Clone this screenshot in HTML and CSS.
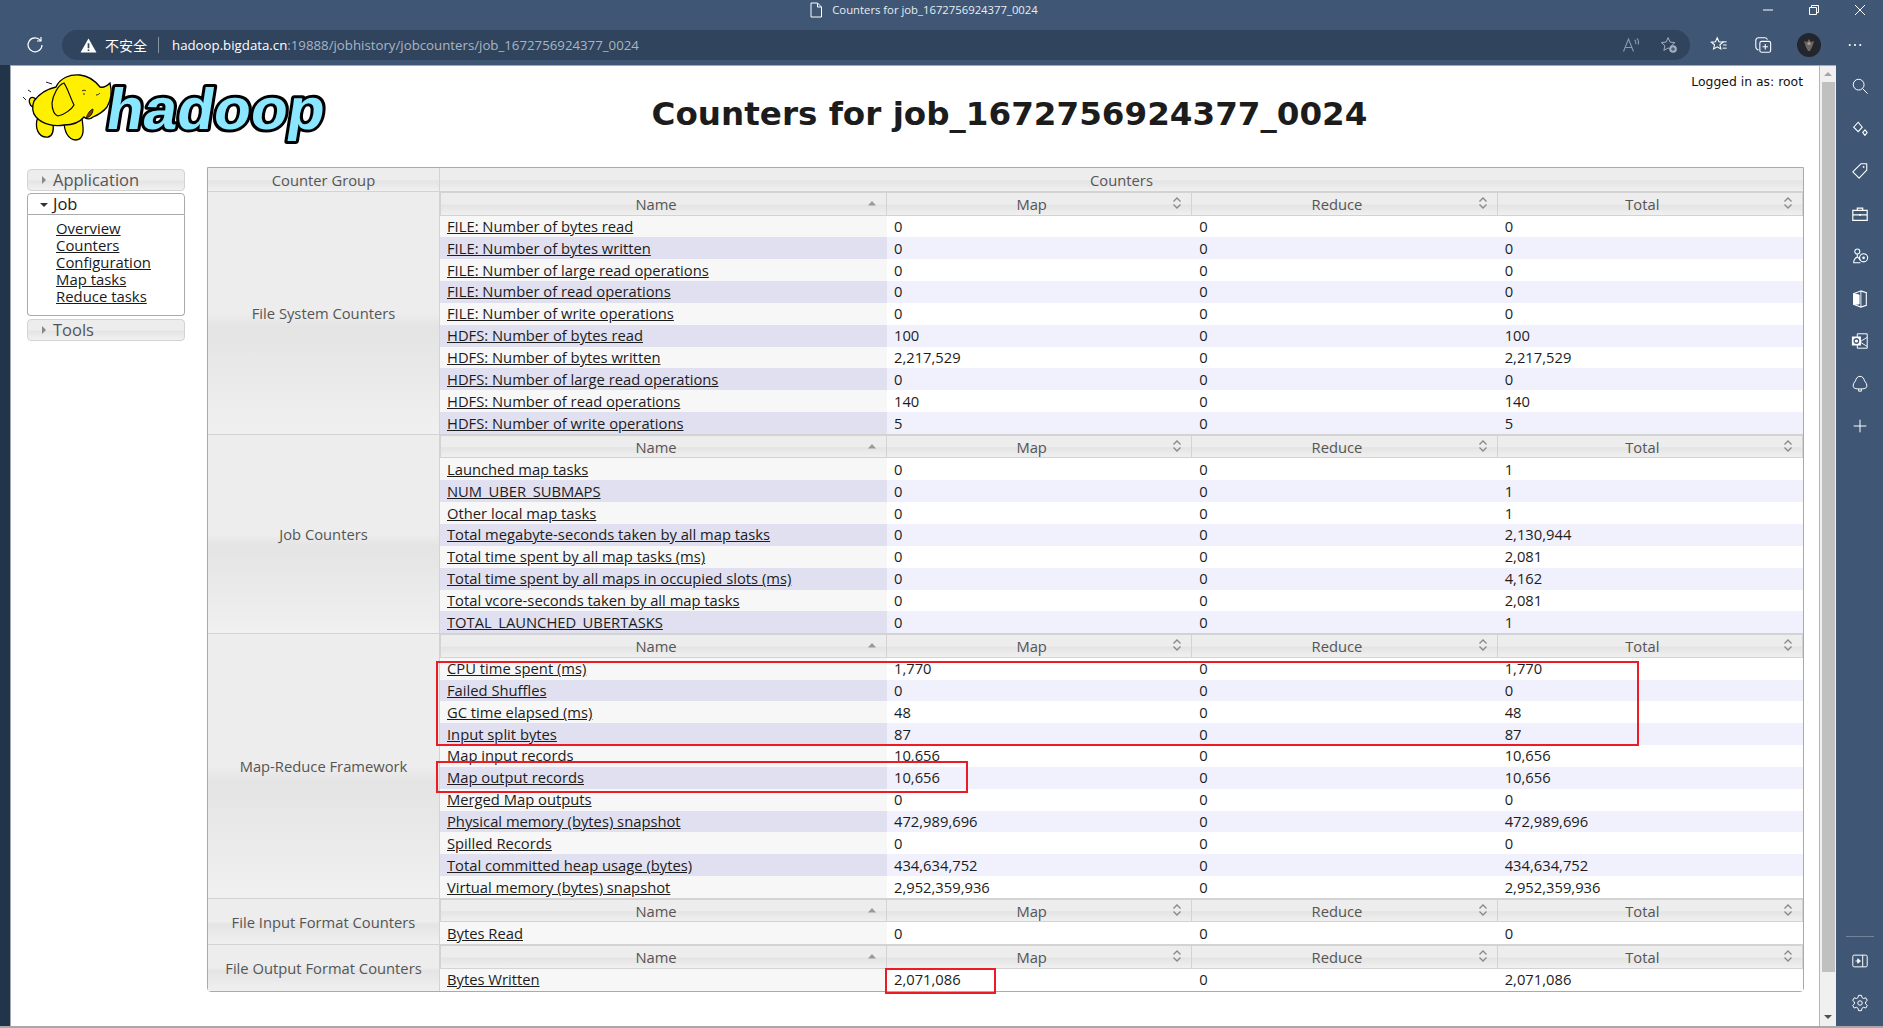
FILE: index.html
```html
<!DOCTYPE html>
<html lang="en">
<head>
    <meta charset="UTF-8">
    <meta name="viewport" content="width=device-width, initial-scale=1.0">
    <title>Counters for job_1672756924377_0024</title>
    <link rel="stylesheet" href="styles.css">
</head>
<body>
    <svg class="sprite" aria-hidden="true">
        <symbol id="sort-asc" viewBox="0 0 12 12"><path d="M2 8.500 6 4l4 4.500z" fill="#999"/></symbol>
        <symbol id="sort-both" viewBox="0 0 12 14"><path d="M2.500 5.500 6 2l3.500 3.500M2.500 8.500 6 12l3.500-3.500" fill="none" stroke="#888" stroke-width="1.300"/></symbol>
    </svg>

    <!-- browser title bar -->
    <div class="titlebar">
        <svg class="tab-icon" viewBox="0 0 14 16"><path d="M2 1h6.500L12.500 5v10H2zM8.500 1v4h4" fill="none" stroke="#fff" stroke-width="1"/></svg>
        <span class="tab-title">Counters for job_1672756924377_0024</span>
        <div class="window-btns">
            <svg viewBox="0 0 12 12"><path d="M1 6h10" stroke="#fff" stroke-width="1"/></svg>
            <svg viewBox="0 0 12 12"><path d="M1.500 3.500h7v7h-7zM3.500 3.500V1.500h7v7H8.500" fill="none" stroke="#fff" stroke-width="1"/></svg>
            <svg viewBox="0 0 12 12"><path d="M1 1l10 10M11 1 1 11" stroke="#fff" stroke-width="1"/></svg>
        </div>
    </div>

    <!-- browser toolbar -->
    <div class="toolbar">
        <svg class="reload" viewBox="0 0 18 18"><path d="M14.500 4.500A7 7 0 1 0 16 9M15 1v4h-4" fill="none" stroke="#fff" stroke-width="1.200"/></svg>
        <div class="addressbar">
            <svg class="warn" viewBox="0 0 18 16"><path d="M9 0.500 17.500 15.500H0.500z" fill="#fff"/><path d="M9 5.500v5.500M9 12.200v1.600" stroke="#33475f" stroke-width="1.800"/></svg>
            <span class="not-secure">不安全</span>
            <span class="addr-sep"></span>
            <span class="url"><b>hadoop.bigdata.cn</b>:19888/jobhistory/jobcounters/job_1672756924377_0024</span>
            <div class="addr-icons">
                <svg viewBox="0 0 18 18"><path d="M1.500 15.500 6.500 3l5 12.500M3.200 11.500h6.600M12.500 4c1.500.8 1.500 2.500 1 4M14.800 2.500c2 1.500 2 4 1.200 6" fill="none" stroke="#8b9aac" stroke-width="1.100"/></svg>
                <svg viewBox="0 0 20 20"><path d="M9 1.800l2.200 5 5.300.5-4 3.500 1.200 5.200L9 13.300 4.300 16l1.200-5.200-4-3.500 5.300-.5z" fill="none" stroke="#a3afbd" stroke-width="1.100"/><circle cx="14.500" cy="14.500" r="4.200" fill="#a3afbd"/><path d="M14.500 12.300v4.400M12.300 14.500h4.400" stroke="#2f435c" stroke-width="1.100"/></svg>
            </div>
        </div>
        <div class="toolbar-icons">
            <svg class="fav" viewBox="0 0 20 20"><path d="M8 2l1.900 4.400 4.600.4-3.500 3 1 4.600L8 12l-4 2.400 1-4.600-3.500-3 4.600-.4z" fill="none" stroke="#fff" stroke-width="1.200"/><path d="M13.500 6.500h5M14.500 10h4M14 13.500h4.500" stroke="#fff" stroke-width="1.100"/></svg>
            <svg class="collections" viewBox="0 0 20 20"><path d="M5 15.500C3 15 2 13.500 2 12V5c0-2 1.500-3 3-3h7c1.500 0 2.500.8 3 2" fill="none" stroke="#fff" stroke-width="1.200"/><rect x="6.500" y="6" width="12" height="12" rx="2" fill="none" stroke="#fff" stroke-width="1.200"/><path d="M12.500 9v6M9.500 12h6" stroke="#fff" stroke-width="1.200"/></svg>
            <svg class="avatar" viewBox="0 0 24 24"><circle cx="12" cy="12" r="12" fill="#23262d"/><path d="M12 6l2 3 3-1-1.500 5L13 18h-2l-2.500-5L7 8l3 1z" fill="#6d6664"/><circle cx="12" cy="10.500" r="1.500" fill="#a89d94"/></svg>
            <svg class="more" viewBox="0 0 16 4"><circle cx="2" cy="2" r="1.200" fill="#fff"/><circle cx="8" cy="2" r="1.200" fill="#fff"/><circle cx="14" cy="2" r="1.200" fill="#fff"/></svg>
        </div>
    </div>

    <div class="main">
        <div class="left-strip"></div>

        <div class="page">
            <div class="page-header">
                <svg class="logo" viewBox="0 0 320 100">
                    <text class="logo-text" x="84" y="68" textLength="218" lengthAdjust="spacingAndGlyphs" transform="skewX(-9) translate(11 0)">hadoop</text>
                    <!-- tail -->
                    <path d="M16 38C11 34 8 38 10 43 11 46 14 47 15 45" fill="#fff000" stroke="#000" stroke-width="1.300"/>
                    <!-- legs, behind the body -->
                    <path d="M18 56C14 66 18 77 28 76 33 75 34 70 33 62ZM44 60C44 70 48 79 56 79 64 78 64 70 62 58Z" fill="#fff000" stroke="#000" stroke-width="1.300"/>
                    <path d="M14 40C19 33 27 28 36 26 40 17 50 13 60 14 70 15 76 21 80 26 84 27 87 25 90 22 92 30 91 39 87 46 83 51 78 54 73 56 70 59 66 58 64 56 60 61 52 64 44 64 34 66 22 63 16 56 12 52 12 45 14 40Z" fill="#fff000" stroke="#000" stroke-width="1.300"/>
                    <!-- ear -->
                    <path d="M44 22C38 24 33 34 32 42 32 48 34 54 38 55 44 54 52 48 54 44 50 36 48 28 44 22Z" fill="#ffee00" stroke="#000" stroke-width="1.200"/>
                    <path d="M66 57C68 52 70 49 73 48 73 52 71 56 66 57Z" fill="#7a3b10" stroke="#000" stroke-width=".8"/>
                    <path d="M62 30c1.500-1 3-1 4 0M63 33h2M76 34c2 0 3-1 4-2M3 36l3 3M8 29l3 2M26 21l6 2" fill="none" stroke="#222" stroke-width="1"/>
                </svg>
                <h1>Counters for job_1672756924377_0024</h1>
                <div class="logged-in">Logged in as: root</div>
            </div>

            <div class="content">
                <!-- left menu -->
                <div class="nav">
                    <div class="nav-head"><i class="arrow-right"></i>Application</div>
                    <div class="nav-head nav-open"><i class="arrow-down"></i>Job</div>
                    <ul class="nav-list">
                        <li><a href="#">Overview</a></li>
                        <li><a href="#">Counters</a></li>
                        <li><a href="#">Configuration</a></li>
                        <li><a href="#">Map tasks</a></li>
                        <li><a href="#">Reduce tasks</a></li>
                    </ul>
                    <div class="nav-head"><i class="arrow-right"></i>Tools</div>
                </div>

                <div class="counters-wrap">
                    <table class="counters">
                        <thead>
                            <tr><th class="group-col">Counter Group</th><th class="top-head">Counters</th></tr>
                        </thead>
                        <tbody>
                            <tr>
                                <th class="group-col group-name">File System Counters</th>
                                <td class="group-body">
                                    <table class="inner">
                                        <thead>
                                            <tr>
                                                <th>Name<svg class="sort"><use href="#sort-asc"/></svg></th>
                                                <th>Map<svg class="sort"><use href="#sort-both"/></svg></th>
                                                <th>Reduce<svg class="sort"><use href="#sort-both"/></svg></th>
                                                <th>Total<svg class="sort"><use href="#sort-both"/></svg></th>
                                            </tr>
                                        </thead>
                                        <tbody>
                                            <tr><td><a href="#">FILE: Number of bytes read</a></td><td>0</td><td>0</td><td>0</td></tr>
                                            <tr><td><a href="#">FILE: Number of bytes written</a></td><td>0</td><td>0</td><td>0</td></tr>
                                            <tr><td><a href="#">FILE: Number of large read operations</a></td><td>0</td><td>0</td><td>0</td></tr>
                                            <tr><td><a href="#">FILE: Number of read operations</a></td><td>0</td><td>0</td><td>0</td></tr>
                                            <tr><td><a href="#">FILE: Number of write operations</a></td><td>0</td><td>0</td><td>0</td></tr>
                                            <tr><td><a href="#">HDFS: Number of bytes read</a></td><td>100</td><td>0</td><td>100</td></tr>
                                            <tr><td><a href="#">HDFS: Number of bytes written</a></td><td>2,217,529</td><td>0</td><td>2,217,529</td></tr>
                                            <tr><td><a href="#">HDFS: Number of large read operations</a></td><td>0</td><td>0</td><td>0</td></tr>
                                            <tr><td><a href="#">HDFS: Number of read operations</a></td><td>140</td><td>0</td><td>140</td></tr>
                                            <tr><td><a href="#">HDFS: Number of write operations</a></td><td>5</td><td>0</td><td>5</td></tr>
                                        </tbody>
                                    </table>
                                </td>
                            </tr>
                            <tr>
                                <th class="group-col group-name">Job Counters</th>
                                <td class="group-body">
                                    <table class="inner">
                                        <thead>
                                            <tr>
                                                <th>Name<svg class="sort"><use href="#sort-asc"/></svg></th>
                                                <th>Map<svg class="sort"><use href="#sort-both"/></svg></th>
                                                <th>Reduce<svg class="sort"><use href="#sort-both"/></svg></th>
                                                <th>Total<svg class="sort"><use href="#sort-both"/></svg></th>
                                            </tr>
                                        </thead>
                                        <tbody>
                                            <tr><td><a href="#">Launched map tasks</a></td><td>0</td><td>0</td><td>1</td></tr>
                                            <tr><td><a href="#">NUM_UBER_SUBMAPS</a></td><td>0</td><td>0</td><td>1</td></tr>
                                            <tr><td><a href="#">Other local map tasks</a></td><td>0</td><td>0</td><td>1</td></tr>
                                            <tr><td><a href="#">Total megabyte-seconds taken by all map tasks</a></td><td>0</td><td>0</td><td>2,130,944</td></tr>
                                            <tr><td><a href="#">Total time spent by all map tasks (ms)</a></td><td>0</td><td>0</td><td>2,081</td></tr>
                                            <tr><td><a href="#">Total time spent by all maps in occupied slots (ms)</a></td><td>0</td><td>0</td><td>4,162</td></tr>
                                            <tr><td><a href="#">Total vcore-seconds taken by all map tasks</a></td><td>0</td><td>0</td><td>2,081</td></tr>
                                            <tr><td><a href="#">TOTAL_LAUNCHED_UBERTASKS</a></td><td>0</td><td>0</td><td>1</td></tr>
                                        </tbody>
                                    </table>
                                </td>
                            </tr>
                            <tr>
                                <th class="group-col group-name">Map-Reduce Framework</th>
                                <td class="group-body">
                                    <table class="inner">
                                        <thead>
                                            <tr>
                                                <th>Name<svg class="sort"><use href="#sort-asc"/></svg></th>
                                                <th>Map<svg class="sort"><use href="#sort-both"/></svg></th>
                                                <th>Reduce<svg class="sort"><use href="#sort-both"/></svg></th>
                                                <th>Total<svg class="sort"><use href="#sort-both"/></svg></th>
                                            </tr>
                                        </thead>
                                        <tbody>
                                            <tr><td><a href="#">CPU time spent (ms)</a></td><td>1,770</td><td>0</td><td>1,770</td></tr>
                                            <tr><td><a href="#">Failed Shuffles</a></td><td>0</td><td>0</td><td>0</td></tr>
                                            <tr><td><a href="#">GC time elapsed (ms)</a></td><td>48</td><td>0</td><td>48</td></tr>
                                            <tr><td><a href="#">Input split bytes</a></td><td>87</td><td>0</td><td>87</td></tr>
                                            <tr><td><a href="#">Map input records</a></td><td>10,656</td><td>0</td><td>10,656</td></tr>
                                            <tr><td><a href="#">Map output records</a></td><td>10,656</td><td>0</td><td>10,656</td></tr>
                                            <tr><td><a href="#">Merged Map outputs</a></td><td>0</td><td>0</td><td>0</td></tr>
                                            <tr><td><a href="#">Physical memory (bytes) snapshot</a></td><td>472,989,696</td><td>0</td><td>472,989,696</td></tr>
                                            <tr><td><a href="#">Spilled Records</a></td><td>0</td><td>0</td><td>0</td></tr>
                                            <tr><td><a href="#">Total committed heap usage (bytes)</a></td><td>434,634,752</td><td>0</td><td>434,634,752</td></tr>
                                            <tr><td><a href="#">Virtual memory (bytes) snapshot</a></td><td>2,952,359,936</td><td>0</td><td>2,952,359,936</td></tr>
                                        </tbody>
                                    </table>
                                </td>
                            </tr>
                            <tr>
                                <th class="group-col group-name">File Input Format Counters</th>
                                <td class="group-body">
                                    <table class="inner">
                                        <thead>
                                            <tr>
                                                <th>Name<svg class="sort"><use href="#sort-asc"/></svg></th>
                                                <th>Map<svg class="sort"><use href="#sort-both"/></svg></th>
                                                <th>Reduce<svg class="sort"><use href="#sort-both"/></svg></th>
                                                <th>Total<svg class="sort"><use href="#sort-both"/></svg></th>
                                            </tr>
                                        </thead>
                                        <tbody>
                                            <tr><td><a href="#">Bytes Read</a></td><td>0</td><td>0</td><td>0</td></tr>
                                        </tbody>
                                    </table>
                                </td>
                            </tr>
                            <tr>
                                <th class="group-col group-name">File Output Format Counters</th>
                                <td class="group-body">
                                    <table class="inner">
                                        <thead>
                                            <tr>
                                                <th>Name<svg class="sort"><use href="#sort-asc"/></svg></th>
                                                <th>Map<svg class="sort"><use href="#sort-both"/></svg></th>
                                                <th>Reduce<svg class="sort"><use href="#sort-both"/></svg></th>
                                                <th>Total<svg class="sort"><use href="#sort-both"/></svg></th>
                                            </tr>
                                        </thead>
                                        <tbody>
                                            <tr><td><a href="#">Bytes Written</a></td><td>2,071,086</td><td>0</td><td>2,071,086</td></tr>
                                        </tbody>
                                    </table>
                                </td>
                            </tr>
                        </tbody>
                    </table>

                    <!-- red marks drawn over the table -->
                    <div class="mark mark-a"></div>
                    <div class="mark mark-b"></div>
                    <div class="mark mark-c"></div>
                </div>
            </div>
        </div>

        <div class="scrollbar">
            <i class="scroll-up"></i>
            <div class="scroll-thumb"></div>
            <i class="scroll-down"></i>
        </div>

        <!-- edge sidebar -->
        <div class="sidebar">
            <svg viewBox="0 0 20 20"><circle cx="8.500" cy="8.500" r="6" fill="none" stroke="#fff" stroke-width="1.100"/><path d="M13 13l5.500 5.500" stroke="#fff" stroke-width="1.100"/></svg>
            <svg viewBox="0 0 20 20"><path d="M8 2.500 12.500 8 8 13 3 8zM15.500 11l2.500 3-2.500 3-2.500-3z" fill="none" stroke="#fff" stroke-width="1.200"/></svg>
            <svg viewBox="0 0 20 20"><path d="M11 2h6.500v7L9 18 2 11z" fill="none" stroke="#fff" stroke-width="1.200" stroke-linejoin="round"/><circle cx="14" cy="5.500" r="1" fill="#fff"/></svg>
            <svg viewBox="0 0 20 20"><path d="M2 6h16v11H2zM2 11h16M7 6V3.500h6V6" fill="none" stroke="#fff" stroke-width="1.300"/><path d="M9 10h2v2H9z" fill="#fff"/></svg>
            <svg viewBox="0 0 20 20"><circle cx="7" cy="5" r="2.800" fill="none" stroke="#fff" stroke-width="1.200"/><path d="M7 8v3M3 17c0-3 2-5 4-6 2 1 3 2 3.500 4M2.500 17.500h8" fill="none" stroke="#fff" stroke-width="1.200"/><circle cx="14" cy="12" r="4.500" fill="none" stroke="#fff" stroke-width="1.200"/><circle cx="14" cy="12" r="1.500" fill="#fff"/></svg>
            <svg viewBox="0 0 20 20"><path d="M11 1 3 4v12l8 3 6-2V3z" fill="none" stroke="#fff" stroke-width="1.200"/><path d="M3 4l6 1.500v10L3 16zM11 1v18" fill="#fff" stroke="#fff"/></svg>
            <svg viewBox="0 0 20 20"><path d="M7 2h11v16H7z" fill="none" stroke="#fff" stroke-width="1.100"/><path d="M8 10l10 6M8 12l5-3 5-3" fill="none" stroke="#fff" stroke-width="1"/><rect x="1" y="5" width="10" height="10" fill="#fff"/><circle cx="6" cy="10" r="2.500" fill="none" stroke="#3f5775" stroke-width="1.400"/></svg>
            <svg viewBox="0 0 20 20"><path d="M10 1.500C7 1.500 5.500 4 5 6.500 3.500 8 2 10.500 2.500 13c.5 2 3 2.500 7.500 2.500s7-.5 7.500-2.500c.5-2.500-1-5-2.500-6.500C14.500 4 13 1.500 10 1.500z" fill="none" stroke="#fff" stroke-width="1.100"/><path d="M8.500 15.500v2.500h3v-2.500" fill="none" stroke="#fff" stroke-width="1.100"/></svg>
            <svg viewBox="0 0 20 20"><path d="M10 3v14M3 10h14" stroke="#fff" stroke-width="1.100"/></svg>
            <div class="sidebar-bottom">
                <div class="side-rule"></div>
                <svg viewBox="0 0 20 20"><rect x="2" y="3.500" width="16" height="13" rx="1.500" fill="none" stroke="#fff" stroke-width="1.100"/><path d="M13 3.500v13" stroke="#fff" stroke-width="1.100"/><path d="M5 10h4M7.500 7.500 10.500 10l-3 2.500z" stroke="#fff" fill="#fff" stroke-width="1"/></svg>
                <svg viewBox="0 0 20 20"><path d="M8.300 1.500h3.400l.5 2.500 1.800 1 2.400-.8 1.700 3-1.900 1.600v2.200l1.900 1.700-1.700 2.900-2.400-.8-1.800 1-.5 2.700H8.300l-.5-2.700-1.800-1-2.400.8-1.700-2.900 1.900-1.700V8.800L1.900 7.200l1.700-3 2.400.8 1.800-1z" fill="none" stroke="#fff" stroke-width="1.100"/><circle cx="10" cy="10" r="2.500" fill="none" stroke="#fff" stroke-width="1.100"/></svg>
            </div>
        </div>
    </div>
    <div class="bottom-line"></div>
</body>
</html>
```

FILE: styles.css
```css
/* page frame */
html, body {
    height: 100%;
    margin: 0;
    overflow: hidden;
}

body {
    background: #3f5775;
    font-family: "DejaVu Sans", sans-serif;
    color: #222;
    display: flex;
    flex-direction: column;
}

.sprite {
    display: none;
}

/* browser title bar */
.titlebar {
    height: 30px;
    flex: none;
    display: flex;
    align-items: flex-start;
    justify-content: center;
    position: relative;
    background: #3f5775;
    padding: 2px 36px 0 0;
    box-sizing: border-box;
}

.tab-icon {
    width: 14px;
    height: 16px;
    margin-right: 9px;
}

.tab-title {
    font-family: "Open Sans", sans-serif;
    font-size: 11.300px;
    line-height: 16px;
    color: #e8edf2;
}

.window-btns {
    position: absolute;
    right: 17px;
    top: 4px;
    display: flex;
    gap: 34px;
}

.window-btns svg {
    width: 12px;
    height: 12px;
}

/* browser toolbar */
.toolbar {
    height: 35px;
    flex: none;
    display: flex;
    align-items: flex-start;
    background: #3f5775;
}

.reload {
    width: 18px;
    height: 18px;
    margin: 6px 18px 0 26px;
}

.addressbar {
    width: 1628px;
    height: 30px;
    background: #30445e;
    border-radius: 15px;
    display: flex;
    align-items: center;
    padding-left: 18px;
    box-sizing: border-box;
    flex: none;
}

.warn {
    width: 17px;
    height: 15px;
}

.not-secure {
    font-family: "Noto Sans CJK SC", sans-serif;
    font-size: 14px;
    color: #fff;
    margin-left: 8px;
}

.addr-sep {
    width: 1px;
    height: 16px;
    background: #8595a8;
    margin: 0 13px 0 11px;
}

.url {
    font-family: "Open Sans", sans-serif;
    font-size: 13.250px;
    color: #a9b5c3;
}

.url b {
    font-weight: 400;
    color: #fff;
}

.addr-icons {
    margin-left: auto;
    margin-right: 12px;
    display: flex;
    gap: 20px;
}

.addr-icons svg {
    width: 18px;
    height: 18px;
}

.toolbar-icons {
    display: flex;
    align-items: center;
    height: 30px;
    flex: 1;
}

.toolbar-icons svg {
    width: 18px;
    height: 18px;
    flex: none;
}

.toolbar-icons .fav {
    margin-left: 20px;
}

.toolbar-icons .collections {
    margin-left: 26px;
}

.toolbar-icons .avatar {
    width: 24px;
    height: 24px;
    margin-left: 25px;
}

.toolbar-icons .more {
    width: 14px;
    height: 4px;
    margin-left: 27px;
}

/* main area */
.main {
    flex: 1;
    display: flex;
    min-height: 0;
}

.left-strip {
    width: 10px;
    background: #22344a;
    flex: none;
}

.page {
    flex: 1;
    background: #fff;
    border-top: 1px solid #a3a9b0;
    border-left: 1px solid #a3a9b0;
    min-width: 0;
}

.page-header {
    height: 101px;
    position: relative;
}

.logo {
    position: absolute;
    left: 9px;
    top: -5px;
    width: 320px;
    height: 100px;
}

.logo-text {
    font-family: "Liberation Sans", sans-serif;
    font-weight: 700;
    font-size: 58px;
    fill: #8be6ff;
    stroke: #000;
    stroke-width: 6px;
    stroke-linejoin: round;
    paint-order: stroke;
}

h1 {
    margin: 0;
    padding: 26px 0 0 189px;
    text-align: center;
    font-family: "DejaVu Sans", sans-serif;
    font-weight: 700;
    font-size: 32.600px;
    line-height: 44px;
    color: #1c1c1c;
}

.logged-in {
    position: absolute;
    right: 16px;
    top: 8px;
    font-size: 12.400px;
    color: #111;
}

.content {
    display: flex;
    align-items: flex-start;
    padding-left: 16px;
}

/* left menu */
.nav {
    width: 158px;
    margin-top: 2px;
    margin-right: 22px;
    font-family: "Open Sans", sans-serif;
    flex: none;
}

.nav-head {
    height: 22px;
    line-height: 20px;
    box-sizing: border-box;
    border: 1px solid #d3d3d3;
    border-radius: 4px;
    background: linear-gradient(#ededed 50%, #e4e4e4 55%, #f1f1f1);
    color: #555;
    font-size: 16.500px;
    padding-left: 25px;
    position: relative;
    margin-bottom: 2px;
}

.nav-open {
    background: #fff;
    border-color: #aaa;
    color: #212121;
    border-radius: 4px 4px 0 0;
    margin-bottom: 0;
}

.arrow-right, .arrow-down {
    position: absolute;
    width: 0;
    height: 0;
}

.arrow-right {
    left: 14px;
    top: 6px;
    border-left: 4px solid #888;
    border-top: 4px solid transparent;
    border-bottom: 4px solid transparent;
}

.arrow-down {
    left: 12px;
    top: 9px;
    border-top: 4px solid #333;
    border-left: 4px solid transparent;
    border-right: 4px solid transparent;
}

.nav-list {
    list-style: none;
    margin: 0 0 3px;
    padding: 5px 0 12px 28px;
    height: 101px;
    box-sizing: border-box;
    border: 1px solid #aaa;
    border-top: 0;
    border-radius: 0 0 4px 4px;
    font-size: 14.900px;
    line-height: 17px;
}

.nav-list a {
    color: #1a1a1a;
}

/* counters table */
.counters-wrap {
    position: relative;
    width: 1597px;
}

table {
    border-collapse: separate;
    border-spacing: 0;
    table-layout: fixed;
    width: 100%;
}

.counters {
    border: 1px solid #aaa;
    border-radius: 0 0 4px 4px;
    font-family: "Open Sans", sans-serif;
    font-size: 14.750px;
}

.counters th {
    font-weight: 400;
    color: #555;
    padding: 0;
    background: linear-gradient(#ededed 50%, #e4e4e4 56%, #f0f0f0);
}

.group-col {
    width: 232px;
    height: 24px;
    border-right: 1px solid #d3d3d3;
    border-bottom: 1px solid #d3d3d3;
    box-sizing: border-box;
}

.top-head {
    height: 24px;
    box-sizing: border-box;
    border-bottom: 1px solid #d3d3d3;
}

.counters tbody > tr:last-child > .group-col {
    border-bottom: 0;
}

.group-body {
    padding: 0;
    vertical-align: top;
    border-bottom: 1px solid #d3d3d3;
}

.counters tbody > tr:last-child > .group-body {
    border-bottom: 0;
}

.inner th {
    height: 23.500px;
    box-sizing: border-box;
    position: relative;
    border: 1px solid #d3d3d3;
    border-width: 1px 1px 1px 0;
    line-height: 20px;
    padding: 0 15px 0 0;
}

.inner th:first-child {
    width: 447px;
    border-left: 1px solid #d3d3d3;
}

.sort {
    position: absolute;
    right: 8px;
    top: 3px;
    width: 12px;
    height: 14px;
}

.inner td {
    height: 21.850px;
    padding: 0 0 0 7px;
    box-sizing: border-box;
    background: #fff;
    color: #1c1c1c;
    line-height: 21px;
    white-space: nowrap;
}

.inner td:first-child {
    background: #f7f7f7;
}

.inner tbody tr:nth-child(even) td {
    background: #f0f1fc;
}

.inner tbody tr:nth-child(even) td:first-child {
    background: #e1e0f0;
}

.inner a {
    color: #1c1c1c;
}

/* red marks */
.mark {
    position: absolute;
    border: 2px solid #ed1c24;
    box-sizing: border-box;
}

.mark-a {
    left: 229px;
    top: 494px;
    width: 1203px;
    height: 85px;
}

.mark-b {
    left: 229px;
    top: 594px;
    width: 532px;
    height: 32px;
}

.mark-c {
    left: 678px;
    top: 801px;
    width: 111px;
    height: 26px;
}

/* scrollbar */
.scrollbar {
    width: 17px;
    flex: none;
    background: #f0f0f0;
    border-left: 1px solid #b5b5b5;
    border-top: 1px solid #a3a9b0;
    box-sizing: border-box;
    position: relative;
}

.scroll-thumb {
    position: absolute;
    left: 2px;
    right: 1px;
    top: 16px;
    height: 890px;
    background: #c0c0c0;
}

.scroll-up, .scroll-down {
    position: absolute;
    left: 4px;
    width: 0;
    height: 0;
    border-left: 4px solid transparent;
    border-right: 4px solid transparent;
}

.scroll-up {
    top: 6px;
    border-bottom: 4px solid #a5a5a5;
}

.scroll-down {
    bottom: 7px;
    border-top: 4px solid #505050;
}

/* edge sidebar */
.sidebar {
    width: 47px;
    flex: none;
    display: flex;
    flex-direction: column;
    align-items: center;
    padding-top: 12px;
    gap: 24.500px;
    box-sizing: border-box;
    position: relative;
}

.sidebar svg {
    width: 18px;
    height: 18px;
    flex: none;
}

.sidebar-bottom {
    margin-top: auto;
    display: flex;
    flex-direction: column;
    align-items: center;
    gap: 24px;
    padding-bottom: 14px;
}

.side-rule {
    width: 28px;
    height: 1px;
    background: #6f839b;
    margin-bottom: -9px;
}

.bottom-line {
    height: 2px;
    flex: none;
    background: #a8a8a8;
}
```
